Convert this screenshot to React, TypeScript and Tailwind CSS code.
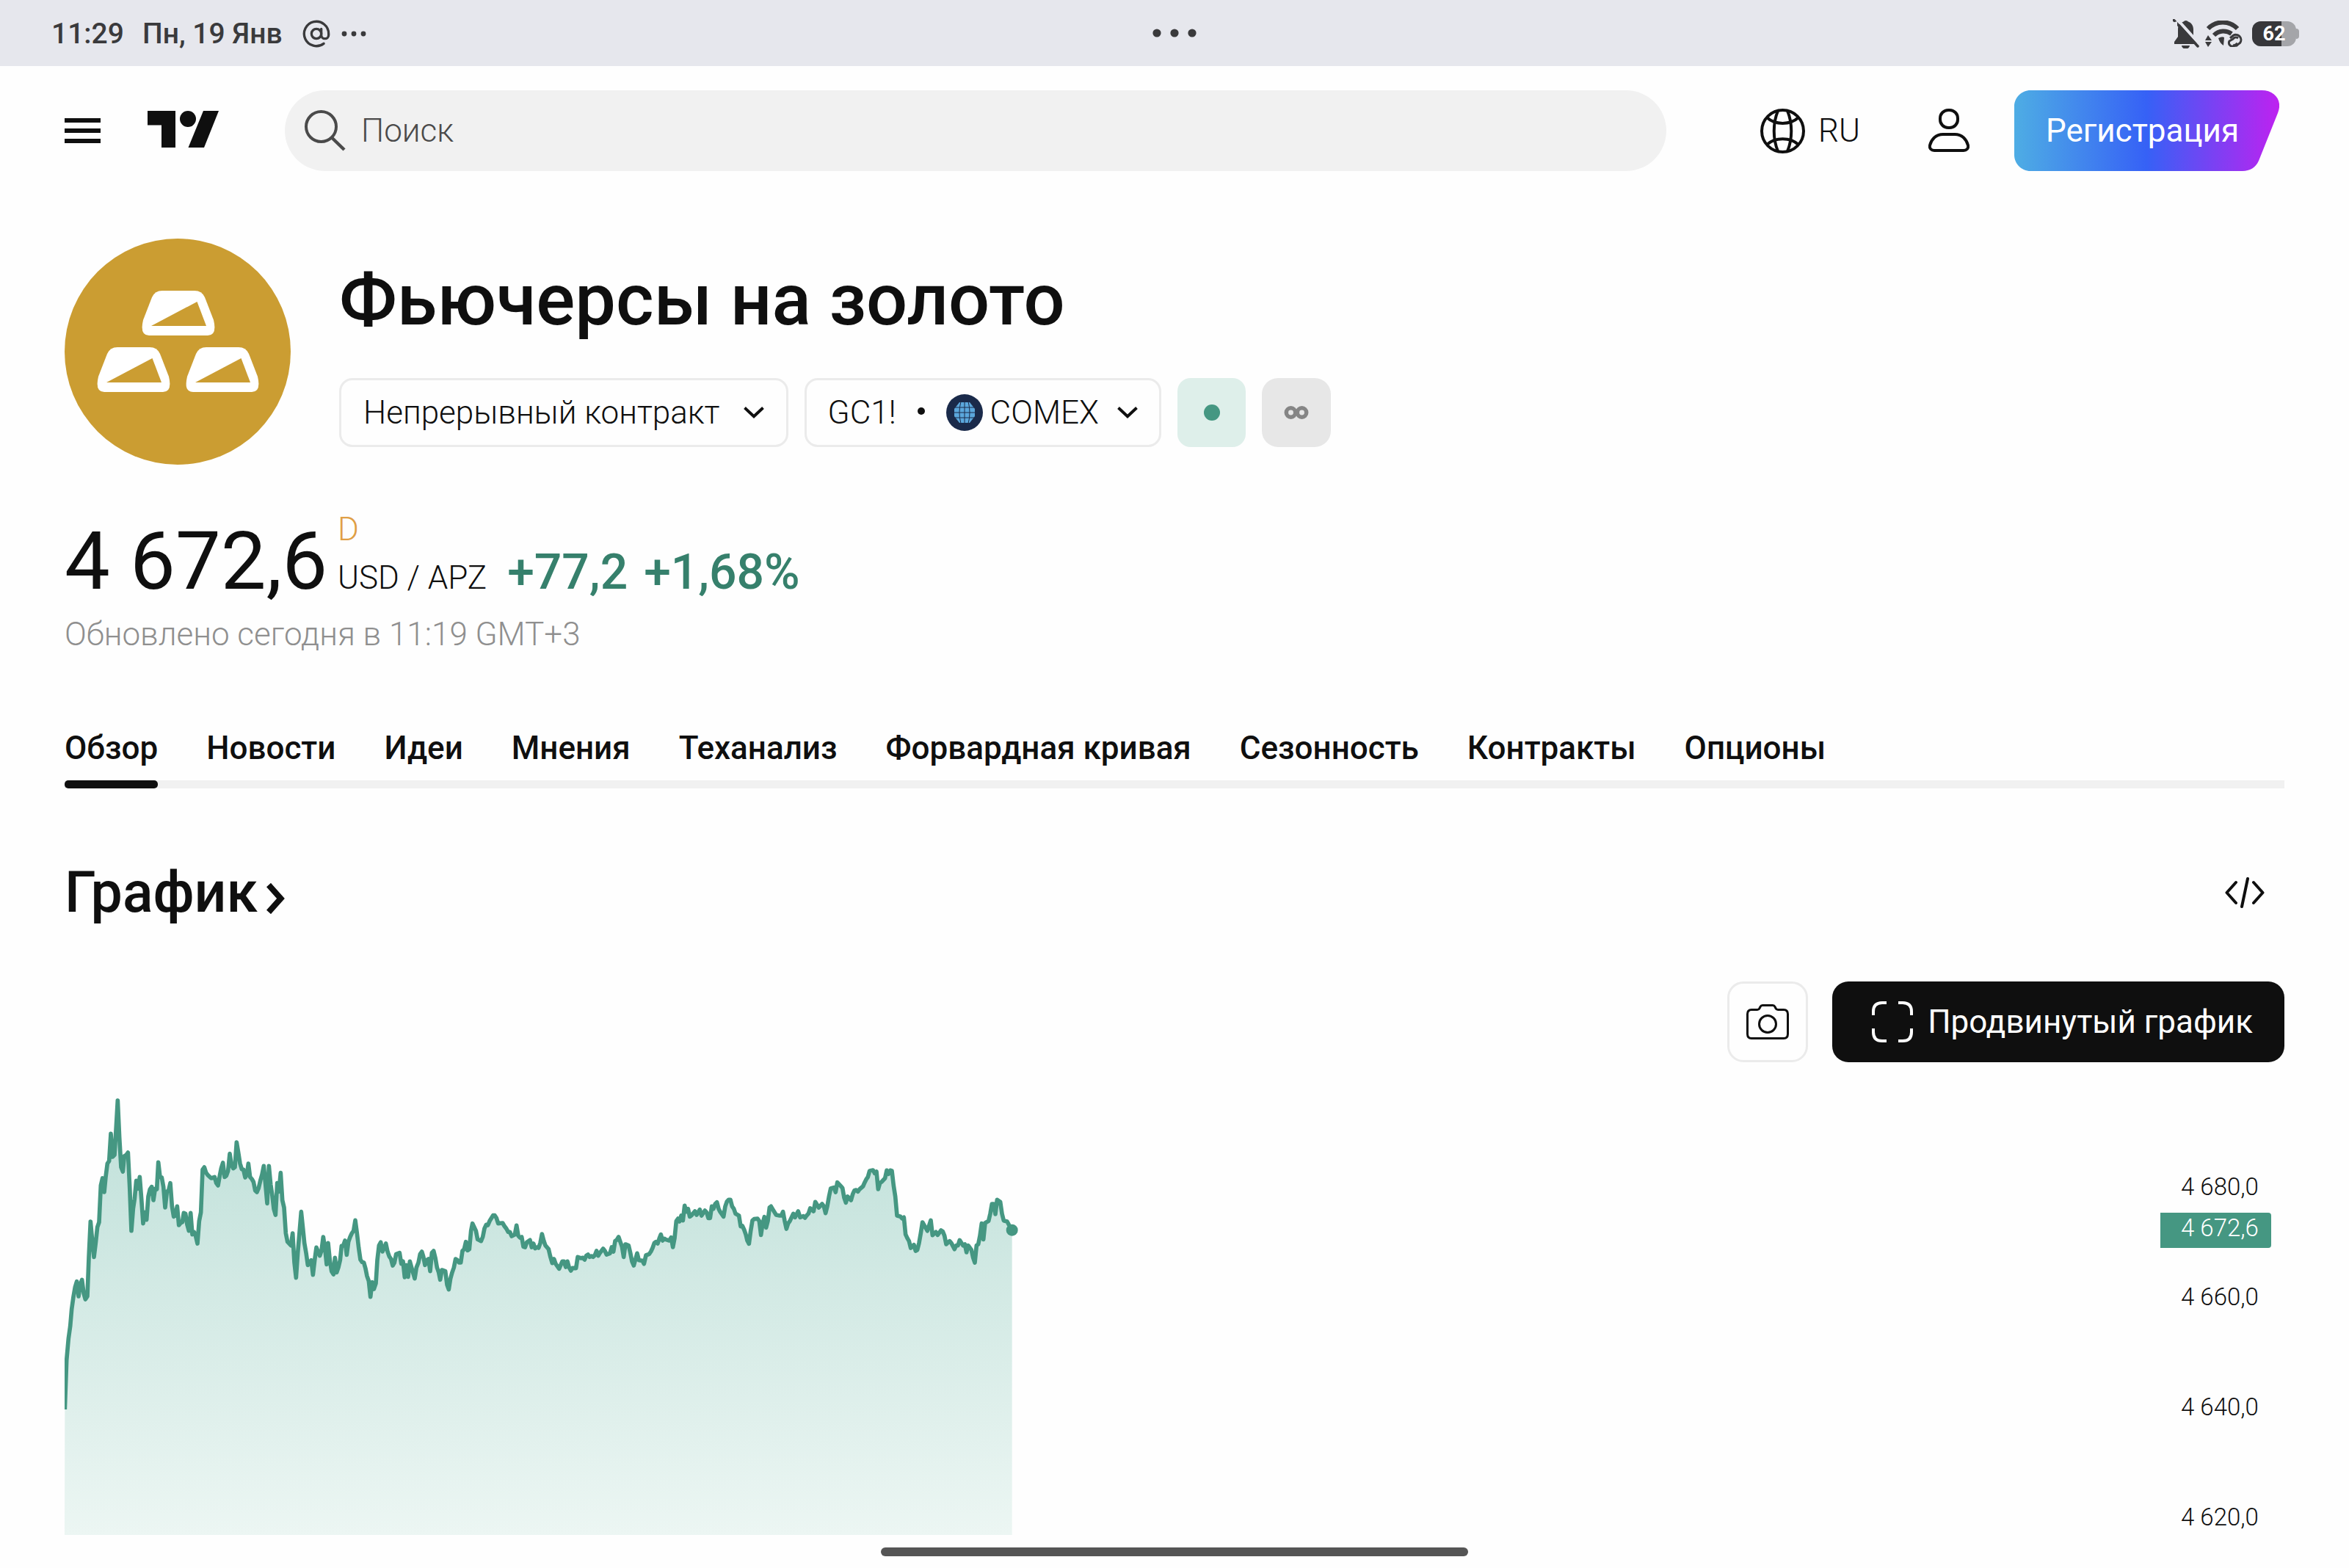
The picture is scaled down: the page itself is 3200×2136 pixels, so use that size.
// src/App.tsx

import React, { useId, useState } from 'react';
import { AtSign } from 'lucide-react';

type Point = [number, number];

const TABS = [
    'Обзор',
    'Новости',
    'Идеи',
    'Мнения',
    'Теханализ',
    'Форвардная кривая',
    'Сезонность',
    'Контракты',
    'Опционы',
];

const PRICE_LEVELS = ['4 680,0', '4 660,0', '4 640,0', '4 620,0'];

// Three parts of the session, each one with its own origin
const NIGHT: Point[] = [
    [85, 1380], [92, 1180], [100, 1090], [107, 1040], [113, 970], [120, 920], [127, 880], [134, 857], [141, 918], [148, 870],
    [155, 850], [162, 905], [169, 930], [177, 918], [183, 760], [190, 612], [197, 690], [204, 757], [211, 700], [218, 635],
    [225, 615], [232, 465], [239, 435], [246, 492], [252, 430], [259, 375], [266, 365], [273, 253], [280, 348], [288, 340],
    [294, 240], [301, 117], [308, 270], [315, 390], [322, 408], [328, 345], [336, 340], [343, 330], [350, 470], [357, 650],
    [364, 560], [370, 520], [377, 445], [384, 478], [391, 430], [398, 520], [405, 620], [412, 575], [419, 605], [426, 510],
    [433, 480], [440, 470], [447, 525], [454, 478], [461, 480], [467, 370], [474, 430], [481, 432], [488, 470], [495, 555],
    [502, 490], [509, 485], [516, 455], [523, 550], [530, 592], [537, 585], [544, 550], [551, 627], [558, 618], [565, 615],
    [571, 577], [578, 580], [585, 625], [592, 650], [599, 577], [606, 665], [613, 655], [620, 672], [627, 702], [634, 610],
    [641, 575], [648, 400], [655, 390], [662, 412], [669, 422], [683, 435], [697, 430], [704, 455], [711, 465], [718, 425],
    [724, 395], [731, 372], [738, 430], [745, 425], [752, 405], [759, 335], [766, 380], [773, 395], [780, 390], [787, 288],
    [794, 330], [801, 375], [808, 398], [815, 400], [822, 432], [829, 420], [835, 375], [842, 430], [849, 438], [856, 450],
    [863, 485], [870, 492], [877, 475], [884, 445], [891, 420], [898, 385], [905, 460], [912, 538], [919, 385], [926, 460],
    [932, 500], [939, 560], [946, 585], [953, 455], [960, 490], [967, 413], [974, 525], [981, 555], [988, 660], [995, 695],
    [1009, 710], [1016, 660], [1023, 780], [1030, 842], [1037, 740], [1051, 572], [1058, 640], [1064, 700], [1071, 740], [1078, 790],
    [1085, 782], [1092, 770], [1099, 830], [1106, 770], [1113, 718], [1120, 735], [1127, 752], [1134, 730], [1141, 675], [1148, 720],
    [1155, 787], [1161, 700], [1168, 770], [1175, 815], [1183, 828], [1189, 760], [1196, 820], [1203, 800], [1210, 770], [1216, 712],
    [1223, 710], [1230, 690], [1237, 748], [1244, 695], [1251, 675], [1258, 660], [1265, 650], [1272, 607], [1279, 660], [1286, 720],
    [1293, 768], [1300, 778], [1307, 780], [1314, 805], [1320, 835], [1327, 855], [1334, 920], [1341, 860], [1348, 888], [1356, 865],
    [1362, 770], [1369, 710], [1376, 697], [1383, 735], [1390, 720], [1397, 702], [1404, 735], [1411, 755], [1418, 765], [1425, 792],
    [1432, 780], [1439, 745], [1453, 740], [1460, 785], [1467, 775], [1474, 840], [1480, 790],
];

const MORNING: Point[] = [
    [48, 718], [55, 655], [62, 680], [75, 725], [82, 680], [90, 660], [97, 625], [104, 615], [110, 635], [117, 670],
    [124, 650], [131, 645], [138, 695], [145, 620], [152, 612], [159, 640], [166, 680], [173, 700], [179, 730], [186, 690],
    [200, 695], [207, 750], [214, 770], [221, 725], [228, 700], [235, 680], [242, 645], [249, 650], [256, 660], [263, 660],
    [270, 612], [277, 605], [284, 575], [291, 610], [298, 605], [305, 530], [311, 500], [318, 515], [325, 530], [332, 565],
    [346, 572], [353, 555], [360, 520], [367, 505], [374, 507], [381, 490], [395, 467], [402, 467], [409, 478], [416, 500],
    [434, 498], [441, 510], [450, 522], [457, 535], [464, 535], [471, 552], [484, 545], [491, 508], [498, 550], [505, 558],
    [512, 555], [519, 595], [526, 597], [533, 577], [546, 568], [553, 597], [560, 582], [567, 602], [574, 597], [581, 600],
    [588, 580], [595, 543], [602, 570], [609, 590], [622, 605], [629, 635], [637, 662], [644, 645], [651, 665], [665, 685],
    [678, 655], [685, 655], [692, 678], [699, 655], [706, 680], [713, 693], [720, 682], [734, 683], [741, 637], [755, 642],
    [762, 640], [769, 648], [776, 632], [783, 627], [790, 637], [797, 633], [804, 637], [811, 630], [818, 612], [825, 632],
    [832, 620], [845, 603], [852, 612], [859, 627], [873, 622], [880, 597], [887, 615], [894, 572], [901, 567], [908, 555],
    [915, 575], [922, 595], [929, 637], [936, 585], [949, 590], [956, 620], [963, 655], [970, 672], [984, 622], [991, 650],
    [1005, 652], [1012, 665], [1020, 630], [1033, 625], [1040, 615], [1047, 600], [1054, 580], [1061, 575], [1068, 582], [1075, 560],
    [1081, 545], [1088, 570], [1095, 562], [1102, 566], [1115, 570], [1123, 557], [1130, 597], [1137, 560], [1144, 490], [1151, 480],
    [1157, 492], [1164, 468], [1171, 488], [1178, 427], [1185, 452], [1192, 440], [1199, 472], [1206, 467], [1220, 450], [1227, 465],
    [1240, 443], [1247, 468], [1261, 447], [1268, 455], [1275, 478], [1282, 478], [1289, 430], [1296, 440], [1303, 420], [1310, 413],
    [1317, 440], [1323, 452], [1337, 472], [1344, 430], [1351, 410], [1358, 403], [1365, 403], [1372, 430], [1379, 440], [1386, 460],
    [1400, 468], [1407, 512], [1414, 510], [1421, 525], [1428, 545], [1434, 570], [1441, 583], [1448, 530], [1455, 488], [1462, 482],
    [1476, 480], [1483, 490], [1490, 547],
];

const DAY: Point[] = [
    [177, 380], [184, 353], [191, 397], [198, 370], [205, 315], [211, 310], [218, 322], [232, 345], [246, 348], [253, 348],
    [260, 332], [267, 370], [274, 402], [281, 380], [288, 370], [302, 340], [309, 355], [322, 330], [330, 355], [343, 350],
    [350, 357], [357, 347], [364, 340], [371, 318], [385, 330], [392, 292], [406, 315], [420, 300], [427, 310], [434, 338],
    [441, 310], [448, 270], [455, 237], [468, 233], [475, 252], [482, 212], [496, 227], [503, 235], [510, 275], [517, 295],
    [524, 270], [538, 285], [545, 260], [552, 245], [559, 243], [566, 250], [573, 240], [587, 228], [594, 212], [600, 200],
    [607, 190], [614, 165], [628, 162], [635, 175], [642, 168], [649, 240], [656, 215], [663, 210], [677, 195], [684, 163],
    [691, 178], [698, 163], [705, 165], [712, 225], [719, 270], [726, 348], [740, 352], [747, 360], [754, 355], [761, 425],
    [768, 440], [775, 452], [782, 480], [795, 467], [802, 492], [809, 488], [816, 460], [823, 420], [830, 375], [850, 410],
    [864, 367], [871, 428], [885, 415], [892, 427], [906, 408], [913, 413], [920, 430], [927, 465], [941, 452], [948, 460],
    [961, 485], [968, 470], [975, 470], [982, 448], [996, 470], [1003, 465], [1010, 498], [1017, 470], [1030, 488], [1037, 520],
    [1044, 540], [1051, 470], [1058, 465], [1065, 430], [1072, 380], [1079, 445], [1086, 378], [1100, 370], [1107, 340], [1114, 300],
    [1121, 300], [1128, 342], [1135, 283], [1148, 292], [1155, 340], [1162, 368], [1176, 372], [1183, 385], [1196, 407],
];

const shift = (points: Point[], dx: number, dy: number): Point[] => points.map(([x, y]) => [x + dx, y + dy]);

const SERIES = [...NIGHT, ...shift(MORNING, 1440, 120), ...shift(DAY, 2760, 240)];

const ChevronIcon = () => (
    <svg viewBox="0 0 28 16" className="w-[28px] h-[16px]" fill="none" stroke="#0f0f0f" strokeWidth="4">
        <path d="M1.5 1.5 14 13.2 26.5 1.5" />
    </svg>
);

const StatusBar = () => (
    <div className="relative flex h-[90px] items-center justify-between bg-[#e6e7ed] pl-[70px] pr-[68px] pt-[2px] text-[#3a3a3c]">
        <div className="flex items-center text-[39px] font-medium leading-[48px]">
            <span>11:29</span>
            <span className="ml-[25px]">Пн, 19 Янв</span>
            <AtSign className="ml-[26px]" size={40} strokeWidth={2} />
            <svg viewBox="0 0 34 8" className="ml-[14px] w-[34px] h-[8px]" fill="currentColor">
                <circle cx="4" cy="4" r="3.4" />
                <circle cx="17" cy="4" r="3.4" />
                <circle cx="30" cy="4" r="3.4" />
            </svg>
        </div>

        <svg viewBox="0 0 60 12" className="absolute left-1/2 top-[39px] w-[60px] h-[12px] -translate-x-1/2" fill="currentColor">
            <circle cx="6" cy="6" r="5.6" />
            <circle cx="30" cy="6" r="5.6" />
            <circle cx="54" cy="6" r="5.6" />
        </svg>

        <div className="flex items-center">
            <svg viewBox="0 0 36 40" className="w-[36px] h-[40px]">
                <path d="M18 2a4 4 0 0 1 3 1.500C25.500 5 28 9 28 14v9l5 8v3H2v-3l5-7V14C7 8 10 5 14.500 3.500A4 4 0 0 1 18 2Z" fill="currentColor" />
                <path d="M12 36h11a5.500 4.500 0 0 1-11 0Z" fill="currentColor" />
                <path d="M4-2 38 36" stroke="#e6e7ed" strokeWidth="4" />
                <path d="M1 1 34 37" stroke="currentColor" strokeWidth="3.500" strokeLinecap="round" />
                <path d="M-1 5 6 13V3Z" fill="#e6e7ed" />
            </svg>
            <svg viewBox="0 0 52 36" className="ml-[8px] w-[52px] h-[36px]" fill="none" stroke="currentColor">
                <path d="M4 11C15-.5 33-.5 44 11" strokeWidth="6" />
                <path d="M12 20c7-7 17-7 24-2" strokeWidth="6" />
                <path d="M18 24q5-3 8-1l-1 11q-5-3-7-10Z" fill="currentColor" stroke="none" />
                <path d="M4 20 9 27H0ZM4 36 0 29h9Z" fill="currentColor" stroke="none" />
                <path d="M34 24l4-3.500a7 7 0 0 1 9.500 10L43 34a6 6 0 0 1-5-1" strokeWidth="3" />
                <path d="M45 24a5 5 0 0 0-7 1l-5 3a5 5 0 0 0 6 7l5-4" strokeWidth="3" />
            </svg>
            <div className="relative ml-[12px] flex h-[34px] w-[60px] items-center justify-center overflow-hidden rounded-[12px] bg-[#a4a5a9]">
                <span className="absolute inset-y-0 left-0 w-[40px] bg-[#37373a]" />
                <span className="relative text-[27px] font-bold leading-[34px] text-white">62</span>
            </div>
            <span className="h-[14px] w-[4px] rounded-r-[4px] bg-[#a4a5a9]" />
        </div>
    </div>
);

const Header = () => {
    const gradientId = useId();

    return (
        <header className="flex items-center pl-[88px] pr-[95px] pt-[33px]">
            <button type="button" aria-label="Меню" className="flex w-[49px] flex-col gap-[8px]">
                <span className="h-[6px] bg-[#0f0f0f]" />
                <span className="h-[6px] bg-[#0f0f0f]" />
                <span className="h-[6px] bg-[#0f0f0f]" />
            </button>
            <a href="#" aria-label="TradingView" className="mb-[4px] ml-[64px]">
                <svg viewBox="0 0 97 50" className="w-[97px] h-[50px]" fill="#0f0f0f">
                    <path d="M0 0h38v50H19V19.500H0Z" />
                    <circle cx="55" cy="11" r="11" />
                    <path d="M76 0h21L77 50H55.500Z" />
                </svg>
            </a>

            <label className="ml-[90px] flex h-[110px] flex-1 items-center rounded-full bg-[#f1f1f1] pl-[27px]">
                <svg viewBox="0 0 56 56" className="w-[56px] h-[56px]" fill="none" stroke="#4a4a4a" strokeWidth="4">
                    <circle cx="22.500" cy="22.500" r="20.500" />
                    <path d="M37 37.500 54 54" strokeWidth="4.500" />
                </svg>
                <input
                    type="text"
                    aria-label="Поиск"
                    placeholder="Поиск"
                    className="ml-[21px] flex-1 bg-transparent text-[44px] font-light leading-[60px] outline-none placeholder:text-[#4a4a4a]"
                />
            </label>

            <button type="button" className="ml-[128px] flex items-center gap-[18px] text-[44px] font-light leading-[60px]">
                <svg viewBox="0 0 61 61" className="w-[61px] h-[61px]" fill="none" stroke="#0f0f0f" strokeWidth="4">
                    <circle cx="30.500" cy="30.500" r="28.500" />
                    <path d="M24 3c-7 17-7 38 0 55M37 3c7 17 7 38 0 55" />
                    <path d="M9 12c11 10.500 32 10.500 43 0M9 49c11-10.500 32-10.500 43 0" />
                </svg>
                RU
            </button>
            <button type="button" aria-label="Профиль" className="ml-[93px]">
                <svg viewBox="0 0 56 60" className="w-[56px] h-[60px]" fill="none" stroke="#0f0f0f" strokeWidth="4">
                    <rect x="16" y="2" width="24" height="24" rx="11" />
                    <path d="M20 35h16c10 0 16 7 18 15 1 4-2 7-6 7H8c-4 0-7-3-6-7 2-8 8-15 18-15Z" />
                </svg>
            </button>
            <button type="button" className="relative ml-[61px] h-[110px] w-[361px] pr-[12px] text-[44px] leading-[60px] text-white">
                <svg viewBox="0 0 361 110" className="absolute inset-0 h-full w-full">
                    <defs>
                        <linearGradient id={gradientId} x1="0" x2="1" y1="0" y2="0">
                            <stop offset="0" stopColor="#4eade4" />
                            <stop offset=".5" stopColor="#3661f6" />
                            <stop offset="1" stopColor="#be22f0" />
                        </linearGradient>
                    </defs>
                    <path
                        d="M22 0H337C355 0 366 14 359 31L333 96C329 105 321 110 311 110H22C10 110 0 100 0 88V22C0 10 10 0 22 0Z"
                        fill={`url(#${gradientId})`}
                    />
                </svg>
                <span className="relative">Регистрация</span>
            </button>
        </header>
    );
};

const GoldBar: React.FC<{ x: number; y: number }> = ({ x, y }) => (
    <g transform={`translate(${x} ${y})`}>
        <path d="M28 0H72Q82 0 86 9L98 40Q103 61 90 61H10Q-3 61 2 40L14 9Q18 0 28 0Z" fill="#fff" />
        <path d="M13 48 75.500 15 88 48Z" fill="#cb9d32" />
    </g>
);

const SymbolHeader = () => (
    <section className="flex gap-[66px] pt-[92px]">
        <svg viewBox="0 0 308 308" className="w-[308px] h-[308px] shrink-0">
            <circle cx="154" cy="154" r="154" fill="#cb9d32" />
            <GoldBar x={105} y={71} />
            <GoldBar x={44} y={148} />
            <GoldBar x={165} y={148} />
        </svg>
        <div className="pt-[27px]">
            <h1 className="text-[99px] font-medium leading-[112px]">Фьючерсы на золото</h1>
            <div className="mt-[51px] flex gap-[22px] text-[44px] font-light leading-[60px]">
                <button type="button" className="flex h-[94px] items-center gap-[32px] rounded-[18px] border-[3px] border-[#ebebeb] px-[30px]">
                    Непрерывный контракт
                    <ChevronIcon />
                </button>
                <button type="button" className="flex h-[94px] items-center rounded-[18px] border-[3px] border-[#ebebeb] px-[29px]">
                    GC1!
                    <span className="mx-[29px] mb-[4px] h-[10px] w-[10px] rounded-full bg-[#0f0f0f]" />
                    <svg viewBox="0 0 50 50" className="mr-[10px] w-[50px] h-[50px]">
                        <circle cx="25" cy="25" r="25" fill="#1a2a4a" />
                        <path d="M18 11h14l7 9v10l-7 9H18l-7-9V20Z" fill="#5ba7dc" />
                        <path
                            d="M25 10v30M20 10q-4 15 0 30M30 10q4 15 0 30M12 18h26M10 25h30M12 32h26"
                            fill="none"
                            stroke="#1a2a4a"
                            strokeWidth="1"
                        />
                    </svg>
                    COMEX
                    <span className="ml-[25px]">
                        <ChevronIcon />
                    </span>
                </button>
                <button type="button" aria-label="Рынок открыт" className="flex h-[94px] w-[93px] items-center justify-center rounded-[18px] bg-[#deefea]">
                    <span className="h-[22px] w-[22px] rounded-full bg-[#459782]" />
                </button>
                <button type="button" aria-label="Непрерывный" className="flex h-[94px] w-[94px] items-center justify-center rounded-[22px] bg-[#e7e7e7]">
                    <svg viewBox="0 0 34 18" className="w-[34px] h-[18px]" fill="none" stroke="#858585" strokeWidth="5.500">
                        <circle cx="9.500" cy="9" r="6.200" />
                        <circle cx="24.500" cy="9" r="6.200" />
                    </svg>
                </button>
            </div>
        </div>
    </section>
);

const Quote = () => (
    <section className="pt-[55px]">
        <div className="flex items-end">
            <span className="text-[110px] font-normal leading-[110px]">4 672,6</span>
            <div className="ml-[14px] flex flex-col text-[44px] font-light leading-[66px]">
                <span className="text-[#e09f45]">D</span>
                <span>USD / APZ</span>
            </div>
            <div className="ml-[28px] flex gap-[22px] text-[66px] font-medium leading-[80px] text-[#36806c]">
                <span>+77,2</span>
                <span>+1,68%</span>
            </div>
        </div>
        <p className="mt-[14px] text-[44px] font-light leading-[60px] text-[#8f8f8f]">Обновлено сегодня в 11:19 GMT+3</p>
    </section>
);

const TabBar = () => {
    const [active, setActive] = useState(TABS[0]);

    return (
        <nav className="relative mt-[92px] flex gap-[66px]">
            <span className="absolute inset-x-0 bottom-0 h-[11px] bg-[#f1f1f1]" />
            {TABS.map(tab => (
                <a
                    key={tab}
                    href="#"
                    onClick={() => setActive(tab)}
                    className="relative flex flex-col gap-[11px] text-[44px] font-medium leading-[66px]"
                >
                    {tab}
                    <span className={tab === active ? 'h-[11px] rounded-[5px] bg-[#0f0f0f]' : 'h-[11px]'} />
                </a>
            ))}
        </nav>
    );
};

const PriceChart = () => {
    const fillId = useId();
    const line = SERIES.map(p => p.join(' ')).join('L');
    const [lastX, lastY] = SERIES[SERIES.length - 1];

    return (
        <div className="mt-[33px] flex justify-between">
            <svg viewBox="84 60 3900 1833" className="w-[1300px] h-[611px]">
                <defs>
                    <linearGradient id={fillId} x1="0" x2="0" y1="0" y2="1">
                        <stop offset="0" stopColor="#bfe0d9" />
                        <stop offset="1" stopColor="#ecf6f3" />
                    </linearGradient>
                </defs>
                <path d={`M84 1893L${line}V1893Z`} fill={`url(#${fillId})`} />
                <path d={`M${line}`} fill="none" stroke="#459782" strokeWidth="17" strokeLinejoin="round" />
                <circle cx={lastX} cy={lastY} r="24" fill="#459782" />
            </svg>

            <div className="relative flex w-[169px] flex-col gap-[110px] pl-[28px] pt-[117px] text-[33px] font-light leading-[40px]">
                {PRICE_LEVELS.map(level => (
                    <span key={level}>{level}</span>
                ))}
                <span className="absolute left-0 top-[172px] w-[151px] rounded-r-[4px] bg-[#459782] pb-[7px] pl-[28px] text-white leading-[41px]">
                    4 672,6
                </span>
            </div>
        </div>
    );
};

export default function App() {
    return (
        <div className="min-h-screen bg-[#fefefe] font-['Roboto',sans-serif] text-[#0f0f0f]">
            <StatusBar />
            <Header />

            <main className="px-[88px] pb-[45px]">
                <SymbolHeader />
                <Quote />
                <TabBar />

                <div className="mt-[98px] flex items-center justify-between pr-[27px]">
                    <h2 className="text-[77px] font-medium leading-[88px]">
                        <a href="#" className="flex items-center gap-[11px]">
                            График
                            <svg viewBox="0 0 26 42" className="mt-[16px] w-[26px] h-[42px]" fill="none" stroke="#0f0f0f" strokeWidth="8">
                                <path d="M4 2.500 20.500 21 4 39.500" />
                            </svg>
                        </a>
                    </h2>
                    <button type="button" aria-label="Код для встраивания">
                        <svg viewBox="0 0 54 42" className="w-[54px] h-[42px]" fill="none" stroke="#0f0f0f" strokeWidth="4" strokeLinecap="round">
                            <path d="M15 7 2.500 21 15 35M39 7 51.500 21 39 35M31 2 23 40" strokeLinejoin="round" />
                        </svg>
                    </button>
                </div>

                <div className="mt-[77px] flex justify-end gap-[33px]">
                    <button
                        type="button"
                        aria-label="Сделать снимок"
                        className="flex h-[110px] w-[110px] items-center justify-center rounded-[22px] border-[3px] border-[#ebebeb]"
                    >
                        <svg viewBox="0 0 58 48" className="w-[58px] h-[48px]" fill="none" stroke="#0f0f0f" strokeWidth="3">
                            <path d="M7 7.500h8q2 0 3-2l1-2q1-2 3-2h14q2 0 3 2l1 2q1 2 3 2h8q5.500 0 5.500 6v27q0 6-5.500 6H7q-5.500 0-5.500-6v-27q0-6 5.500-6Z" />
                            <circle cx="29" cy="27" r="11.500" />
                        </svg>
                    </button>
                    <button type="button" className="flex h-[110px] items-center gap-[20px] rounded-[22px] bg-[#0f0f0f] pl-[54px] pr-[43px] text-[44px] leading-[60px] text-white">
                        <svg viewBox="0 0 56 56" className="w-[56px] h-[56px]" fill="none" stroke="#fff" strokeWidth="4">
                            <path d="M2 19v-5Q2 2 14 2h6M36 2h6q12 0 12 12v5M2 37v5q0 12 12 12h6M36 54h6q12 0 12-12v-5" />
                        </svg>
                        Продвинутый график
                    </button>
                </div>

                <PriceChart />
            </main>

            <div className="fixed bottom-[16px] left-1/2 h-[12px] w-1/4 -translate-x-1/2 rounded-full bg-[#555]" />
        </div>
    );
}
